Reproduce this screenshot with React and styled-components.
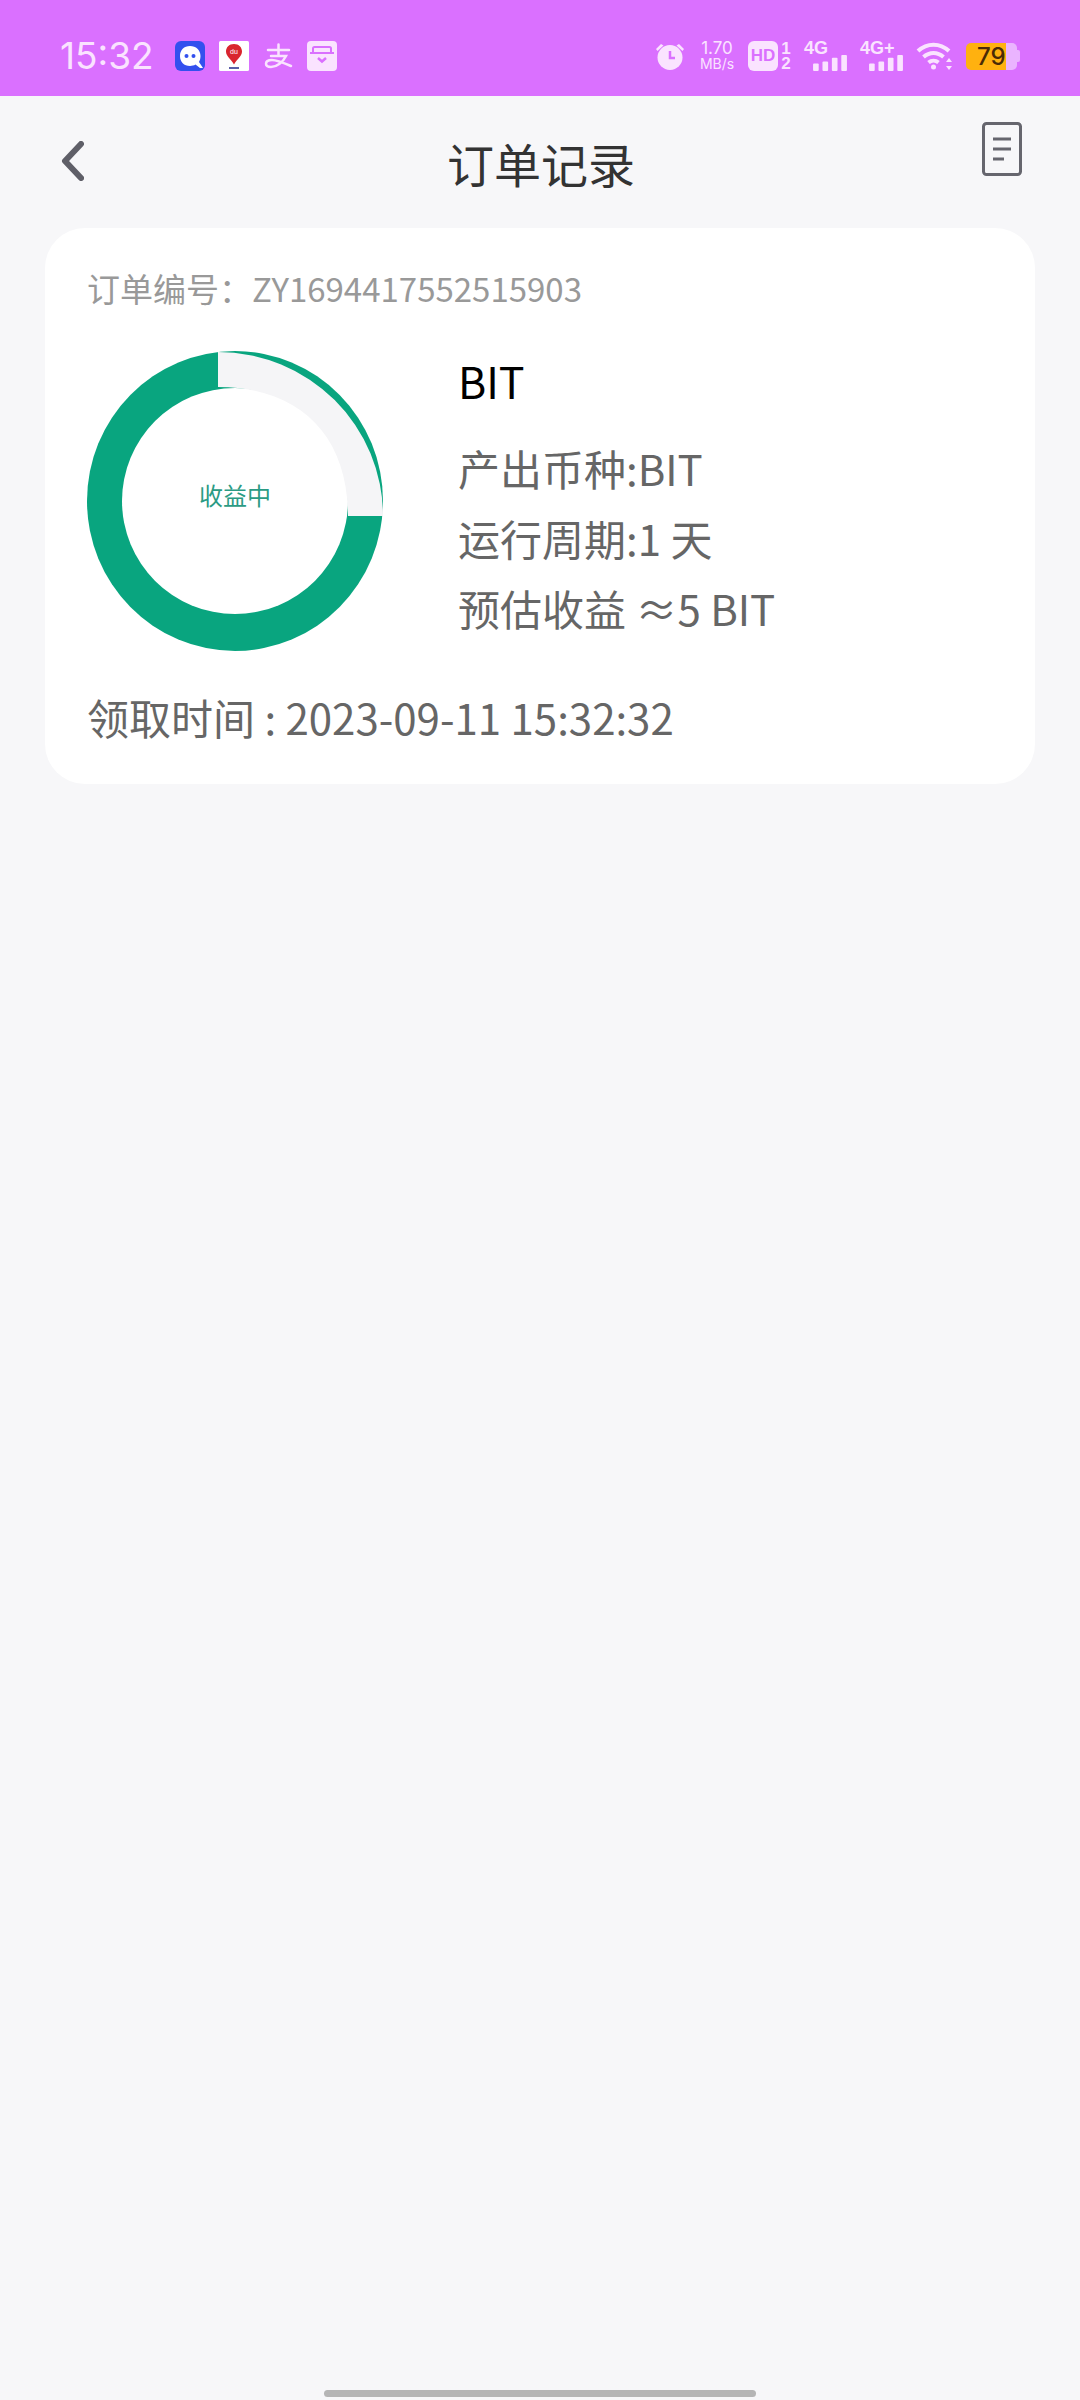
import styled, { createGlobalStyle } from "styled-components";

const GlobalStyle = createGlobalStyle`
  html, body {
    margin: 0;
    padding: 0;
    background: #f7f7f9;
  }
  * {
    box-sizing: border-box;
  }
`;

const barInk = "#fae3ff";
const barBg = "#da70ff";

function GhostIcon() {
  return (
    <svg width="30" height="30" viewBox="0 0 30 30">
      <rect width="30" height="30" rx="6" fill="#3350ee" />
      <path d="M15 5c-6 0-10 4-10 10 0 6 4 10 10 10 2 0 4-.4 5.500-1.400L25 27h3l-4-6c1-1.800 1.500-3.800 1.500-6 0-6-4.500-10-10.500-10z" fill="#fff" />
      <circle cx="11.500" cy="15" r="2" fill="#3350ee" />
      <circle cx="18.500" cy="15" r="2" fill="#3350ee" />
    </svg>
  );
}

function MapIcon() {
  return (
    <svg width="30" height="30" viewBox="0 0 30 30">
      <rect width="30" height="30" rx="1.500" fill="#fff" />
      <path d="M15 3c-5 0-8 3.500-8 7.500 0 4.500 5 7.500 8 13 3-5.500 8-8.500 8-13C23 6.500 20 3 15 3z" fill="#d9252e" />
      <text x="15" y="13" fontSize="7" fill="#fff" textAnchor="middle" fontFamily="Liberation Sans, sans-serif">du</text>
      <rect x="10" y="26" width="10" height="2" fill="#5b5fa8" />
    </svg>
  );
}

function AlipayIcon() {
  return (
    <svg width="30" height="30" viewBox="0 0 30 30" fill="none" stroke={barInk} strokeWidth="2.500" strokeLinecap="round">
      <path d="M5 9h21M15.500 3.500V15M8 15h15c-3 6-9 11-15 11-3 0-5-1.200-5-3.200 0-2.300 2.500-3.800 6-3.800 5 0 12 3 19 6" />
    </svg>
  );
}

function InboxIcon() {
  return (
    <svg width="30" height="30" viewBox="0 0 30 30">
      <rect width="30" height="30" rx="4" fill={barInk} />
      <path d="M6 12V7.500C6 6.500 6.500 6 7.500 6h15c1 0 1.500.5 1.500 1.500V12" fill="none" stroke={barBg} strokeWidth="2" />
      <rect x="3" y="11" width="24" height="2" fill={barBg} />
      <path d="M11 17l4 3.500 4-3.500" fill="none" stroke={barBg} strokeWidth="2.500" />
    </svg>
  );
}

function AlarmIcon() {
  return (
    <svg width="30" height="30" viewBox="0 0 30 30">
      <circle cx="15" cy="16.500" r="12.500" fill={barInk} />
      <path d="M1 8l5-5 2.500 1.500L2.500 10zM29 8l-5-5-2.500 1.500 6 5.500z" fill={barInk} />
      <path d="M15 10v7h5" fill="none" stroke={barBg} strokeWidth="2.500" />
    </svg>
  );
}

function SignalBars() {
  return (
    <svg width="36" height="17" viewBox="0 0 36 17" fill={barInk}>
      <rect x="0" y="9" width="6" height="8" rx="1" />
      <rect x="10" y="7" width="6" height="10" rx="1" />
      <rect x="20" y="3" width="6" height="14" rx="1" />
      <rect x="30" y="0" width="6" height="17" rx="1" />
    </svg>
  );
}

function WifiIcon() {
  return (
    <svg width="38" height="30" viewBox="0 0 38 30" fill="none" stroke={barInk} strokeWidth="4">
      <path d="M2 10c9-8.500 22-8.500 31 0M7.500 16c6-5.500 14-5.500 20 0M12.500 21.500c3-2.500 7-2.500 10 0" />
      <circle cx="17.500" cy="26" r="2.500" fill={barInk} stroke="none" />
      <path d="M33 17l-3 4h6zM33 29l-3-4h6z" fill={barInk} stroke="none" />
    </svg>
  );
}

function BackIcon() {
  return (
    <svg width="24" height="40" viewBox="0 0 24 40" fill="none" stroke="#5f5f68" strokeWidth="6" strokeLinecap="round" strokeLinejoin="round">
      <path d="M21 3L5 20l16 17" />
    </svg>
  );
}

function RecordIcon() {
  return (
    <svg width="40" height="54" viewBox="0 0 40 54" fill="none" stroke="#66666e">
      <rect x="1.500" y="1.500" width="37" height="51" rx="3" strokeWidth="3" />
      <path d="M11 17h18M11 27h18M11 37h11" strokeWidth="3" />
    </svg>
  );
}

function Donut() {
  return (
    <svg width="296" height="300" viewBox="0 0 296 300">
      <ellipse cx="148" cy="150" rx="148" ry="150" fill="#09a57f" />
      <circle cx="148" cy="150" r="113" fill="#fff" />
      <path d="M131 1A165 164 0 0 1 296 165H261C261 84 212 36 131 36Z" fill="#f5f5f7" />
    </svg>
  );
}

export default function App() {
  return (
    <Page>
      <GlobalStyle />
      <StatusBar>
        <StatusGroup>
          <Clock>15:32</Clock>
          <AppIcons>
            <GhostIcon />
            <MapIcon />
            <AlipayIcon />
            <InboxIcon />
          </AppIcons>
        </StatusGroup>
        <StatusGroup>
          <AlarmIcon />
          <Speed>
            <span className="value">1.70</span>
            <span className="unit">MB/s</span>
          </Speed>
          <HdGroup>
            <HdBadge>HD</HdBadge>
            <SimDigits>
              <span>1</span>
              <span>2</span>
            </SimDigits>
          </HdGroup>
          <Network>
            <NetLabel>4G</NetLabel>
            <SignalBars />
          </Network>
          <Network>
            <NetLabel>4G+</NetLabel>
            <SignalBars />
          </Network>
          <WifiIcon />
          <Battery>
            <BatteryBody>79</BatteryBody>
            <BatteryNub />
          </Battery>
        </StatusGroup>
      </StatusBar>

      <Header>
        <BackButton>
          <BackIcon />
        </BackButton>
        <Title>订单记录</Title>
        <RecordButton>
          <RecordIcon />
        </RecordButton>
      </Header>

      <Card>
        <OrderNo>订单编号：ZY1694417552515903</OrderNo>
        <CardBody>
          <DonutWrap>
            <Donut />
            <DonutLabel>收益中</DonutLabel>
          </DonutWrap>
          <Info>
            <CoinName>BIT</CoinName>
            <InfoLine>产出币种:BIT</InfoLine>
            <InfoLine>运行周期:1 天</InfoLine>
            <InfoLine>预估收益 ≈5 BIT</InfoLine>
          </Info>
        </CardBody>
        <ClaimTime>领取时间 : 2023-09-11 15:32:32</ClaimTime>
      </Card>

      <HomeBar />
    </Page>
  );
}

const Page = styled.div`
  display: flex;
  flex-direction: column;
  height: 2400px;
  background: #f7f7f9;
  font-family: "Noto Sans CJK SC", "Noto Sans", sans-serif;
`;

const StatusBar = styled.div`
  display: flex;
  justify-content: space-between;
  align-items: center;
  height: 96px;
  padding: 16px 60px 0 60px;
  background: ${barBg};
  color: ${barInk};
`;

const StatusGroup = styled.div`
  display: flex;
  align-items: center;
  gap: 12px;
`;

const Clock = styled.span`
  width: 103px;
  font-family: Inter, "Liberation Sans", sans-serif;
  font-size: 37px;
  line-height: 40px;
`;

const AppIcons = styled.div`
  display: flex;
  align-items: center;
  gap: 14px;
`;

const Speed = styled.div`
  display: flex;
  flex-direction: column;
  align-items: center;
  width: 38px;
  margin-left: 1px;
  font-family: Inter, "Liberation Sans", sans-serif;
  line-height: 15px;
  .value {
    font-size: 17px;
  }
  .unit {
    font-size: 14px;
  }
`;

const HdGroup = styled.div`
  display: flex;
  align-items: center;
  gap: 2px;
`;

const HdBadge = styled.div`
  display: flex;
  align-items: center;
  justify-content: center;
  width: 30px;
  height: 30px;
  border-radius: 6px;
  background: ${barInk};
  color: ${barBg};
  font-family: "Liberation Sans", sans-serif;
  font-size: 17px;
  font-weight: 700;
`;

const SimDigits = styled.div`
  display: flex;
  flex-direction: column;
  align-items: center;
  width: 12px;
  font-family: "Liberation Sans", sans-serif;
  font-size: 17px;
  font-weight: 700;
  line-height: 15px;
`;

const Network = styled.div`
  display: flex;
  flex-direction: column;
  align-items: flex-end;
  width: 44px;
  height: 30px;
`;

const NetLabel = styled.span`
  align-self: flex-start;
  font-family: "Liberation Sans", sans-serif;
  font-size: 18px;
  font-weight: 700;
  line-height: 14px;
`;

const Battery = styled.div`
  display: flex;
  align-items: center;
`;

const BatteryBody = styled.div`
  width: 51px;
  height: 27px;
  padding-left: 11px;
  border-radius: 5px;
  background: linear-gradient(to right, #ffb10f 40px, #eab4ff 40px);
  color: #4a2b06;
  font-family: Inter, "Liberation Sans", sans-serif;
  font-size: 24px;
  font-weight: 500;
  line-height: 27px;
`;

const BatteryNub = styled.div`
  width: 3px;
  height: 12px;
  border-radius: 0 2px 2px 0;
  background: #eab4ff;
`;

const Header = styled.div`
  display: grid;
  grid-template-columns: 1fr auto 1fr;
  height: 132px;
  padding: 0 58px 0 60px;
`;

const BackButton = styled.div`
  margin-top: 45px;
`;

const Title = styled.h1`
  margin: 40px 0 0 0;
  color: #333;
  font-size: 47px;
  font-weight: 400;
  line-height: 54px;
`;

const RecordButton = styled.div`
  justify-self: end;
  margin-top: 26px;
`;

const Card = styled.div`
  display: flex;
  flex-direction: column;
  margin: 0 45px;
  padding: 40px 42px 37px;
  border-radius: 40px;
  background: #fff;
`;

const OrderNo = styled.div`
  color: #999;
  font-size: 33px;
  line-height: 40px;
`;

const CardBody = styled.div`
  display: flex;
  margin-top: 43px;
`;

const DonutWrap = styled.div`
  display: grid;
  place-items: center;
  width: 296px;
  height: 300px;
  > * {
    grid-area: 1 / 1;
  }
`;

const DonutLabel = styled.span`
  padding-bottom: 13px;
  color: #2b9b84;
  font-size: 24px;
  line-height: 30px;
`;

const Info = styled.div`
  display: flex;
  flex-direction: column;
  margin-left: 75px;
`;

const CoinName = styled.div`
  margin-bottom: 24px;
  color: #000;
  font-size: 43px;
  line-height: 58px;
`;

const InfoLine = styled.div`
  color: #666;
  font-size: 42px;
  line-height: 70px;
  white-space: nowrap;
`;

const ClaimTime = styled.div`
  margin-top: 36px;
  color: #666;
  font-size: 42px;
  line-height: 60px;
`;

const HomeBar = styled.div`
  width: 432px;
  height: 7px;
  margin: auto auto 3px;
  border-radius: 4px;
  background: #b5b5b5;
`;
